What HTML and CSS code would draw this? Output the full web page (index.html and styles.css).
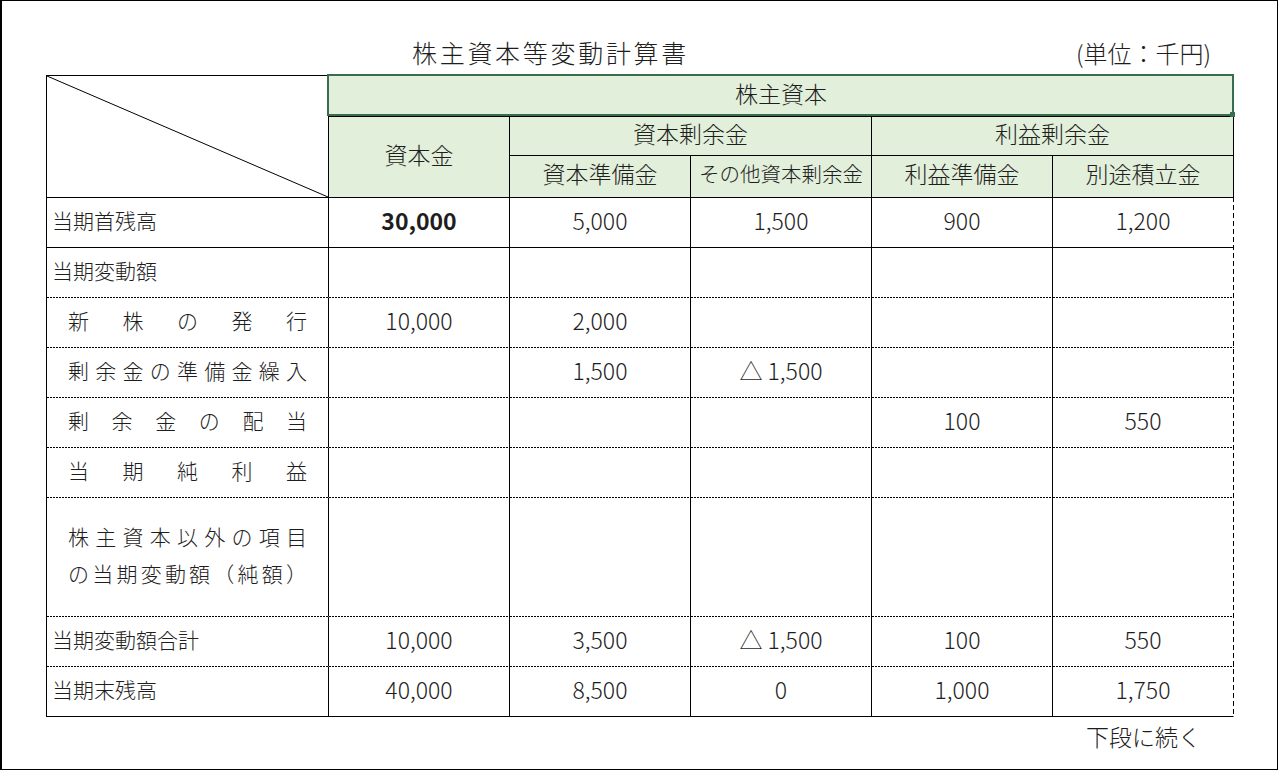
FILE: index.html
```html
<!DOCTYPE html>
<html lang="ja">
<head>
<meta charset="utf-8">
<title>株主資本等変動計算書</title>
<link rel="stylesheet" href="styles.css">
</head>
<body>
<div class="frame">
  <div class="titlebar">
    <h1 class="title">株主資本等変動計算書</h1>
    <div class="unit">(単位：千円)</div>
  </div>

  <div class="sheet">
    <div class="corner span-r3">
      <svg class="diag" width="100%" height="100%" preserveAspectRatio="none"><line x1="0" y1="0" x2="100%" y2="100%" stroke="#000" stroke-width="1"/></svg>
    </div>
    <div class="hd selected span-c5">株主資本</div>
    <div class="hd span-r2">資本金</div>
    <div class="hd span-c2">資本剰余金</div>
    <div class="hd span-c2 last">利益剰余金</div>
    <div class="hd">資本準備金</div>
    <div class="hd prop">その他資本剰余金</div>
    <div class="hd">利益準備金</div>
    <div class="hd last">別途積立金</div>

    <div class="row">
      <div class="lbl">当期首残高</div>
      <div class="num bold">30,000</div>
      <div class="num">5,000</div>
      <div class="num">1,500</div>
      <div class="num">900</div>
      <div class="num">1,200</div>
    </div>
    <div class="row dot">
      <div class="lbl">当期変動額</div>
      <div class="num"></div>
      <div class="num"></div>
      <div class="num"></div>
      <div class="num"></div>
      <div class="num"></div>
    </div>
    <div class="row dot">
      <div class="lbl dist"><span>新</span><span>株</span><span>の</span><span>発</span><span>行</span></div>
      <div class="num">10,000</div>
      <div class="num">2,000</div>
      <div class="num"></div>
      <div class="num"></div>
      <div class="num"></div>
    </div>
    <div class="row dot">
      <div class="lbl dist"><span>剰</span><span>余</span><span>金</span><span>の</span><span>準</span><span>備</span><span>金</span><span>繰</span><span>入</span></div>
      <div class="num"></div>
      <div class="num">1,500</div>
      <div class="num">△ 1,500</div>
      <div class="num"></div>
      <div class="num"></div>
    </div>
    <div class="row dot">
      <div class="lbl dist"><span>剰</span><span>余</span><span>金</span><span>の</span><span>配</span><span>当</span></div>
      <div class="num"></div>
      <div class="num"></div>
      <div class="num"></div>
      <div class="num">100</div>
      <div class="num">550</div>
    </div>
    <div class="row dot">
      <div class="lbl dist"><span>当</span><span>期</span><span>純</span><span>利</span><span>益</span></div>
      <div class="num"></div>
      <div class="num"></div>
      <div class="num"></div>
      <div class="num"></div>
      <div class="num"></div>
    </div>
    <div class="row dot">
      <div class="lbl multi">
        <div class="line"><span>株</span><span>主</span><span>資</span><span>本</span><span>以</span><span>外</span><span>の</span><span>項</span><span>目</span></div>
        <div class="line"><span>の</span><span>当</span><span>期</span><span>変</span><span>動</span><span>額</span><span>（</span><span>純</span><span>額</span><span>）</span></div>
      </div>
      <div class="num"></div>
      <div class="num"></div>
      <div class="num"></div>
      <div class="num"></div>
      <div class="num"></div>
    </div>
    <div class="row dot">
      <div class="lbl">当期変動額合計</div>
      <div class="num">10,000</div>
      <div class="num">3,500</div>
      <div class="num">△ 1,500</div>
      <div class="num">100</div>
      <div class="num">550</div>
    </div>
    <div class="row">
      <div class="lbl">当期末残高</div>
      <div class="num">40,000</div>
      <div class="num">8,500</div>
      <div class="num">0</div>
      <div class="num">1,000</div>
      <div class="num">1,750</div>
    </div>

    <div class="pagebreak"></div>
  </div>

  <div class="footbar">
    <div class="cont">下段に続く</div>
  </div>
</div>
</body>
</html>
```

FILE: styles.css
```css
* { box-sizing: border-box; }

html, body {
  margin: 0;
  padding: 0;
  background: #fff;
}

body {
  font-family: "Noto Sans CJK JP", "Noto Sans", sans-serif;
  font-weight: 300;
  color: #1e1e1e;
}

.frame {
  width: 1278px;
  height: 770px;
  border: 1px solid #000;
  border-left-width: 2px;
  padding-left: 44px;
  background: #fff;
}

/* ---------- title bar ---------- */
.titlebar {
  width: 1188px;
  height: 74px;
  display: flex;
  align-items: flex-end;
  padding-bottom: 10px;
}

.title {
  margin: 0 0 0 366px;
  font-size: 25px;
  font-weight: 300;
  line-height: 1;
  letter-spacing: 2.7px;
}

.unit {
  margin-left: auto;
  width: 181px;
  text-align: center;
  font-size: 24px;
  line-height: 1;
  padding-bottom: 0;
}

/* ---------- sheet grid ---------- */
.sheet {
  position: relative;
  width: 1188px;
  display: grid;
  grid-template-columns: 282px repeat(5, 181px);
  grid-template-rows: 41px 39px 42px repeat(6, 50px) 119px 50px 50px;
  border-left: 1px solid #000;
  border-top: 1px solid #000;
}

.sheet > div:not(.pagebreak),
.row > div {
  border-right: 1px solid #000;
  border-bottom: 1px solid #000;
}

.span-r3 { grid-row: span 3; }
.span-r2 { grid-row: span 2; }
.span-c5 { grid-column: span 5; }
.span-c2 { grid-column: span 2; }

.corner {
  position: relative;
}

.diag {
  position: absolute;
  inset: 0;
  display: block;
  overflow: visible;
}

.hd {
  background: #e2efda;
  display: flex;
  align-items: center;
  justify-content: center;
  padding-bottom: 6px;
  font-size: 23px;
  line-height: 1;
  white-space: nowrap;
}

.hd.prop {
  font-size: 20.5px;
}

.hd.last,
.row > div:last-child {
  border-right-color: transparent;
}

.selected {
  position: relative;
}

.selected::after {
  content: "";
  position: absolute;
  top: -2px;
  left: -2px;
  right: -1px;
  bottom: 0;
  border: 2px solid #3a6d4d;
  pointer-events: none;
}

.selected::before {
  content: "";
  position: absolute;
  right: -2px;
  bottom: -1px;
  width: 5px;
  height: 5px;
  background: #3a6d4d;
  z-index: 2;
}

.row {
  display: contents;
}

.row.dot > div {
  border-bottom-color: transparent;
  background-image: repeating-linear-gradient(90deg, #000 0 2px, transparent 2px 3px);
  background-size: 100% 1px;
  background-position: left bottom;
  background-repeat: no-repeat;
  background-origin: border-box;
}

.lbl {
  display: flex;
  align-items: center;
  padding-left: 5px;
  padding-bottom: 5px;
  font-size: 21px;
  line-height: 1;
  white-space: nowrap;
}

.lbl.dist {
  justify-content: space-between;
  padding: 0 21px 5px;
}

.lbl.multi {
  flex-direction: column;
  align-items: stretch;
  justify-content: center;
  padding: 0 21px 5px;
}

.line {
  display: flex;
  justify-content: space-between;
  line-height: 37px;
}

.num {
  display: flex;
  align-items: center;
  justify-content: center;
  padding-bottom: 5px;
  font-size: 23px;
  line-height: 1;
  white-space: nowrap;
}

.bold {
  font-weight: 700;
}

.pagebreak {
  position: absolute;
  grid-column: 6;
  grid-row: 2 / -1;
  top: 0;
  bottom: 0;
  right: 0;
  width: 1px;
  background: repeating-linear-gradient(180deg, #000 0 5px, transparent 5px 8px);
}

/* ---------- footer ---------- */
.footbar {
  width: 1188px;
  display: flex;
  justify-content: flex-end;
  padding-top: 8px;
}

.cont {
  width: 181px;
  text-align: center;
  font-size: 23px;
  line-height: 1;
}
```
